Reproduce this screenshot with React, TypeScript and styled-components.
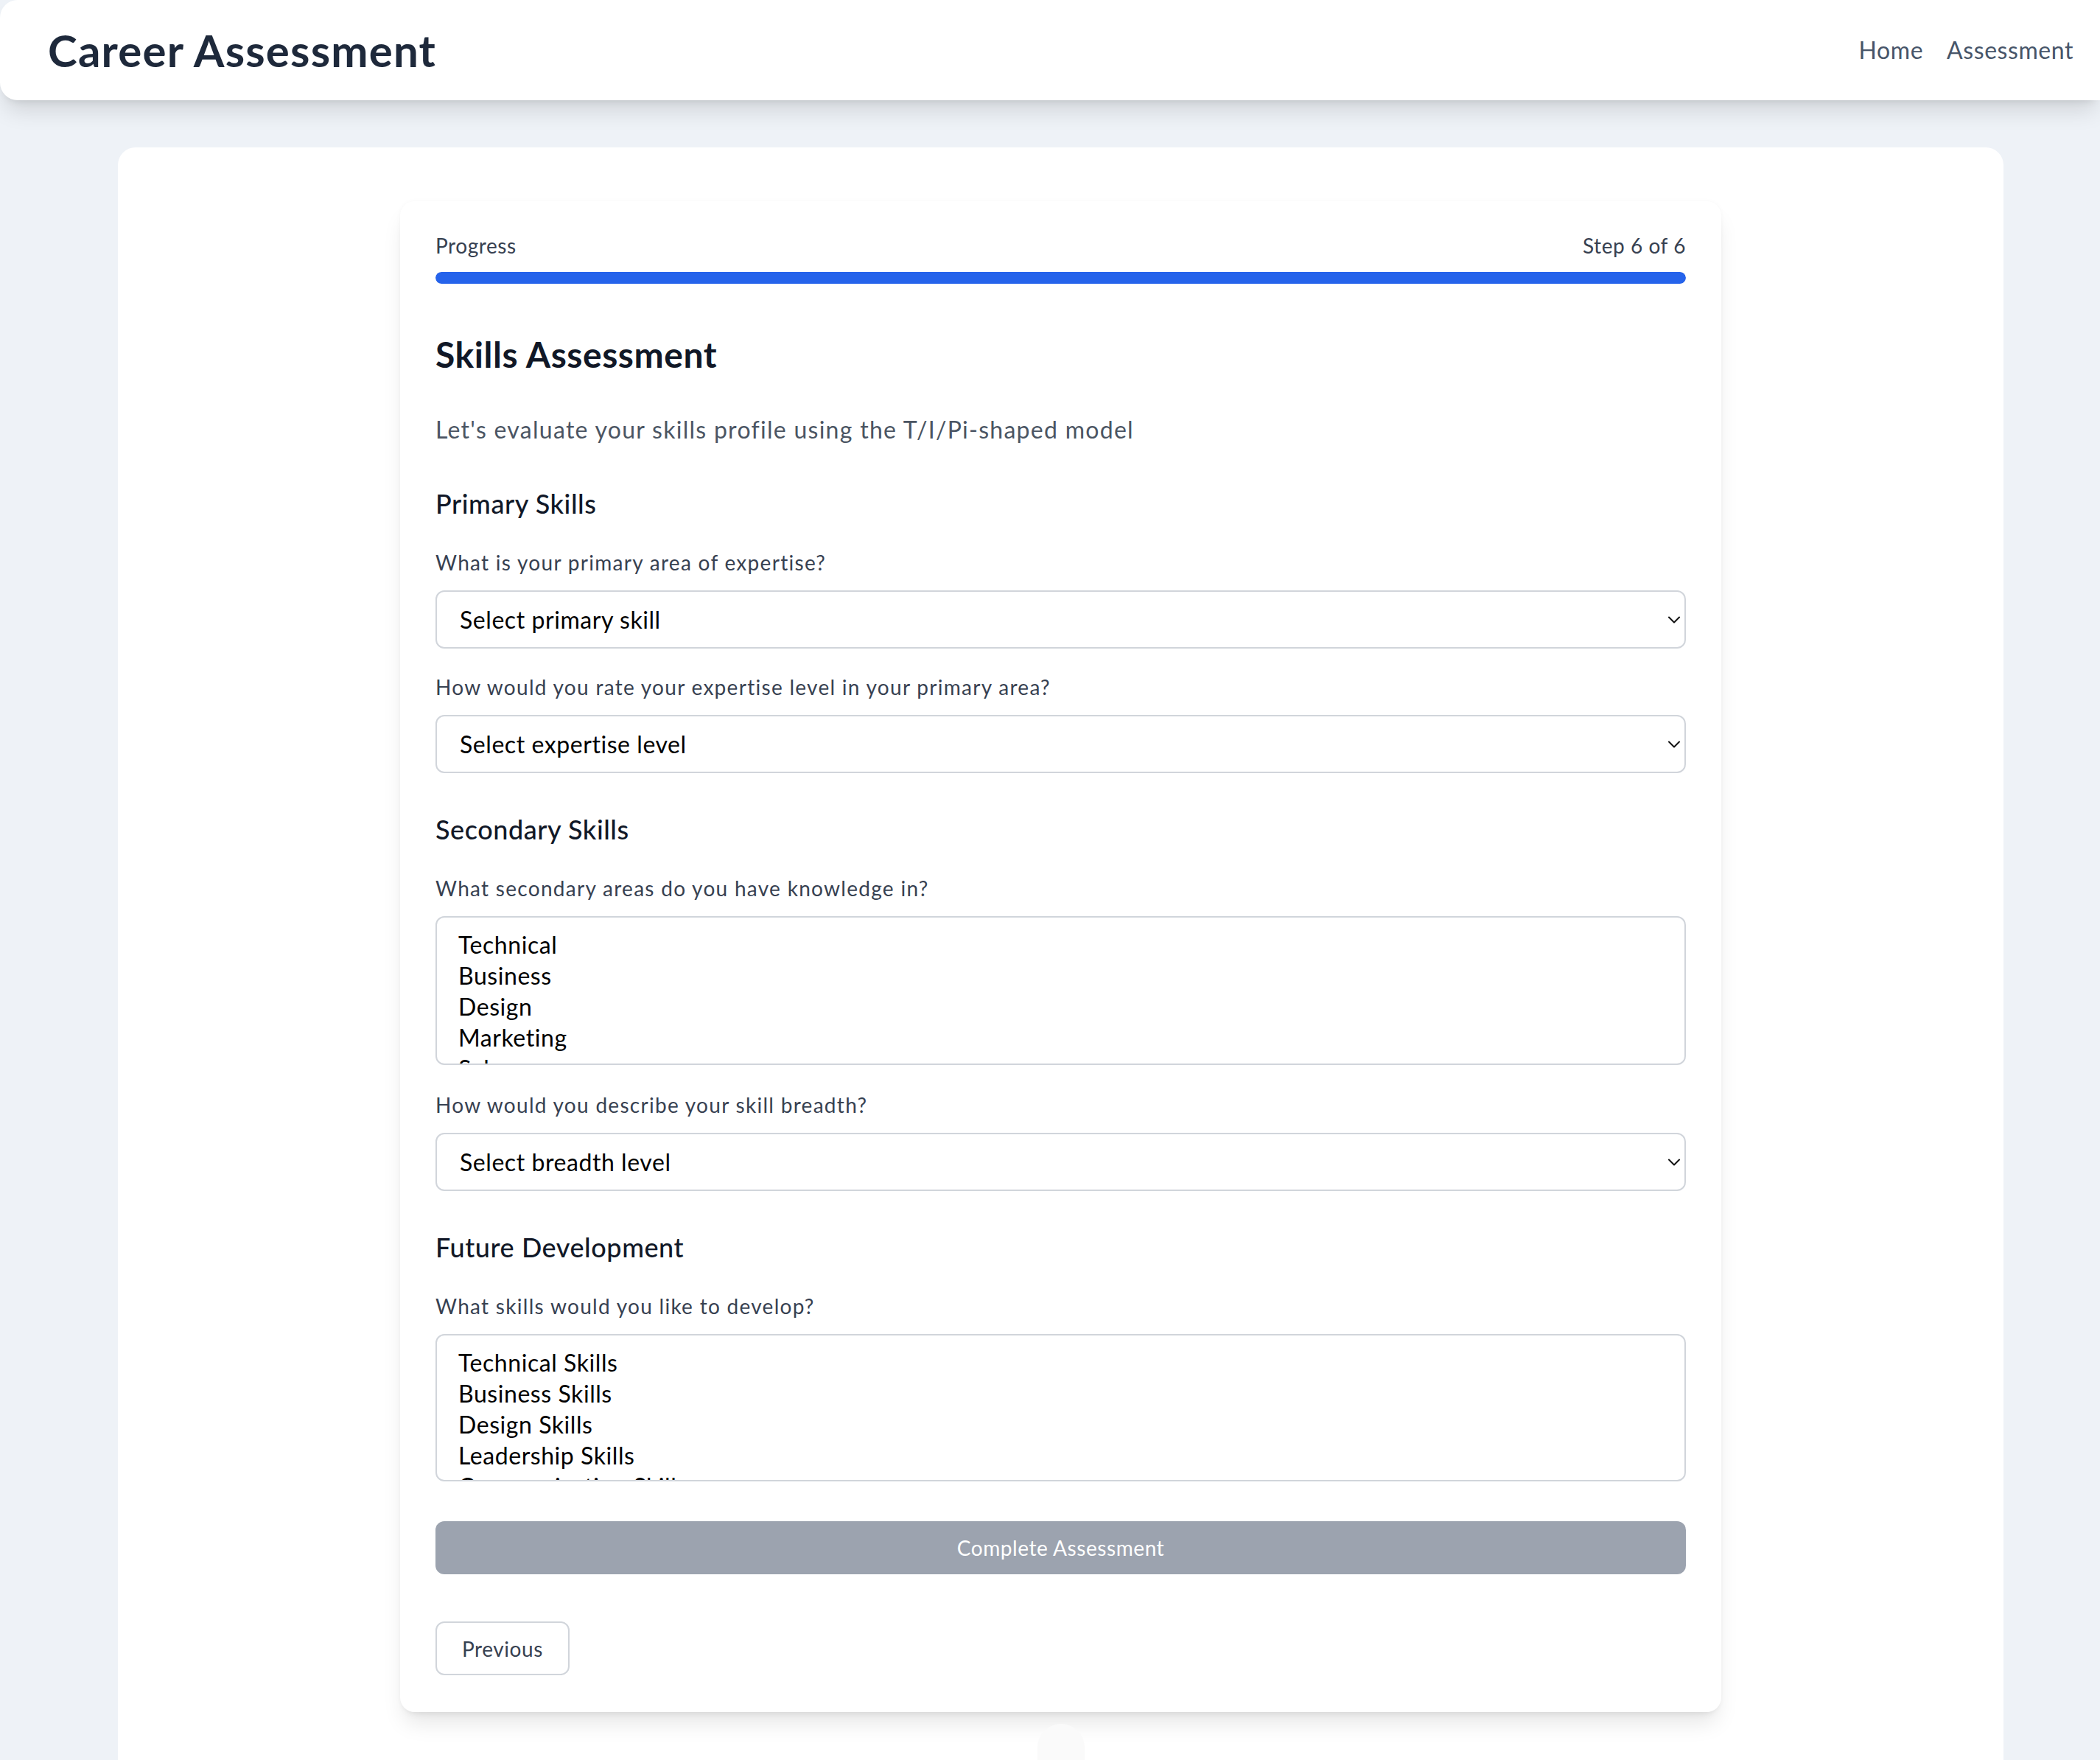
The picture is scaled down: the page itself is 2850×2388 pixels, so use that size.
import React from "react";
import styled, { createGlobalStyle } from "styled-components";

const GlobalStyle = createGlobalStyle`
  html, body {
    margin: 0;
    padding: 0;
    background: #eef2f7;
    overflow: hidden;
  }
  * { box-sizing: border-box; }
  body {
    font-family: "Lato", "Open Sans", sans-serif;
    letter-spacing: 0.035em;
    color: #111827;
  }
`;

const Page = styled.div`
  height: 100vh;
  overflow: hidden;
  background: #eef2f7;
`;

const Header = styled.header`
  position: relative;
  z-index: 2;
  display: flex;
  align-items: center;
  justify-content: space-between;
  height: 136px;
  padding: 0 36px 0 65px;
  background: #ffffff;
  border-radius: 24px 0 0 24px;
  box-shadow: 0 20px 30px -6px rgba(0, 0, 0, 0.12), 0 8px 12px -8px rgba(0, 0, 0, 0.12);
`;

const Brand = styled.h1`
  margin: 0;
  font-size: 60px;
  line-height: 72px;
  font-weight: 700;
  letter-spacing: 0.02em;
  color: #1e293b;
`;

const Nav = styled.nav`
  display: flex;
  gap: 32px;
`;

const NavLink = styled.a`
  font-size: 32px;
  line-height: 48px;
  color: #475569;
  text-decoration: none;
`;

const Main = styled.main`
  padding: 64px 131px 0 160px;
`;

const OuterCard = styled.section`
  background: #ffffff;
  border-radius: 24px;
  padding: 73px 0 80px;
  display: flex;
  flex-direction: column;
  align-items: center;
`;

const FormCard = styled.div`
  width: 1793px;
  background: #ffffff;
  border-radius: 20px;
  padding: 40px 48px 50px;
  box-shadow: 0 20px 30px -6px rgba(0, 0, 0, 0.1), 0 8px 12px -8px rgba(0, 0, 0, 0.1),
    0 0 6px rgba(0, 0, 0, 0.03);
  display: flex;
  flex-direction: column;
`;

const ProgressRow = styled.div`
  display: flex;
  justify-content: space-between;
  font-size: 28px;
  line-height: 40px;
  color: #374151;
  margin-bottom: 16px;
`;

const Track = styled.div`
  height: 16px;
  border-radius: 9999px;
  background: #e5e7eb;
  overflow: hidden;
`;

const Fill = styled.div`
  height: 100%;
  background: #2563eb;
  border-radius: 9999px;
`;

const Title = styled.h2`
  margin: 64px 0 0;
  font-size: 48px;
  line-height: 64px;
  font-weight: 700;
  color: #111827;
`;

const Intro = styled.p`
  margin: 46px 0 0;
  font-size: 32px;
  line-height: 48px;
  letter-spacing: 0.04em;
  color: #4b5563;
`;

const SectionTitle = styled.h3`
  margin: 48px 0 0;
  font-size: 36px;
  line-height: 56px;
  font-weight: 500;
  color: #111827;
`;

const Label = styled.label`
  display: block;
  margin: 32px 0 18px;
  font-size: 28px;
  line-height: 40px;
  letter-spacing: 0.046em;
  color: #374151;
`;

const SelectWrap = styled.div`
  position: relative;
`;

const Select = styled.select`
  display: block;
  width: 100%;
  height: 79px;
  padding: 0 60px 0 31px;
  border: 2px solid #d1d5db;
  border-radius: 12px;
  background: #ffffff;
  font-family: inherit;
  letter-spacing: inherit;
  font-size: 32px;
  color: #000000;
  appearance: none;
  -webkit-appearance: none;
  outline: none;
`;

const Chevron = styled.svg`
  position: absolute;
  right: 8px;
  top: 50%;
  width: 16px;
  height: 10px;
  margin-top: -5px;
  pointer-events: none;
`;

const ListBox = styled.div<{ $h: number }>`
  height: ${(p) => p.$h}px;
  margin-bottom: 2px;
  border: 2px solid #d1d5db;
  border-radius: 12px;
  padding: 16px 29px;
  overflow: hidden;
  background: #ffffff;
`;

const Option = styled.div`
  font-size: 32px;
  line-height: 42px;
  color: #000000;
  white-space: nowrap;
`;

const SubmitButton = styled.button`
  margin-top: 52px;
  width: 100%;
  height: 72px;
  border: none;
  border-radius: 12px;
  background: #9ca3af;
  color: #ffffff;
  font-family: inherit;
  letter-spacing: inherit;
  font-size: 28px;
  cursor: not-allowed;
`;

const Actions = styled.div`
  margin-top: 64px;
  display: flex;
`;

const PrevButton = styled.button`
  height: 73px;
  padding: 0 34px;
  border: 2px solid #d1d5db;
  border-radius: 12px;
  background: #ffffff;
  color: #374151;
  font-family: inherit;
  letter-spacing: inherit;
  font-size: 28px;
`;

const Ghost = styled.div`
  margin-top: 16px;
  width: 64px;
  height: 64px;
  border-radius: 32px 32px 0 0;
  background: #fafafa;
`;

const DropSelect = ({ placeholder }: { placeholder: string }) => (
  <SelectWrap>
    <Select defaultValue="">
      <option value="" disabled>
        {placeholder}
      </option>
    </Select>
    <Chevron viewBox="0 0 16 10" fill="none">
      <path d="M1 1.5 L8 8.5 L15 1.5" stroke="#111" strokeWidth="2" strokeLinecap="round" strokeLinejoin="round" />
    </Chevron>
  </SelectWrap>
);

const secondary = ["Technical", "Business", "Design", "Marketing", "Sales", "Operations"];
const future = [
  "Technical Skills",
  "Business Skills",
  "Design Skills",
  "Leadership Skills",
  "Communication Skills",
  "Analytical Skills",
];

export default function App() {
  return (
    <Page>
      <GlobalStyle />
      <Header>
        <Brand>Career Assessment</Brand>
        <Nav>
          <NavLink href="#">Home</NavLink>
          <NavLink href="#">Assessment</NavLink>
        </Nav>
      </Header>
      <Main>
        <OuterCard>
          <FormCard>
            <ProgressRow>
              <span>Progress</span>
              <span>Step 6 of 6</span>
            </ProgressRow>
            <Track>
              <Fill style={{ width: "100%" }} />
            </Track>

            <Title>Skills Assessment</Title>
            <Intro>Let's evaluate your skills profile using the T/I/Pi-shaped model</Intro>

            <SectionTitle>Primary Skills</SectionTitle>
            <Label>What is your primary area of expertise?</Label>
            <DropSelect placeholder="Select primary skill" />
            <Label>How would you rate your expertise level in your primary area?</Label>
            <DropSelect placeholder="Select expertise level" />

            <SectionTitle>Secondary Skills</SectionTitle>
            <Label>What secondary areas do you have knowledge in?</Label>
            <ListBox $h={202} role="listbox">
              {secondary.map((s) => (
                <Option key={s}>{s}</Option>
              ))}
            </ListBox>
            <Label>How would you describe your skill breadth?</Label>
            <DropSelect placeholder="Select breadth level" />

            <SectionTitle>Future Development</SectionTitle>
            <Label>What skills would you like to develop?</Label>
            <ListBox $h={200} role="listbox">
              {future.map((s) => (
                <Option key={s}>{s}</Option>
              ))}
            </ListBox>

            <SubmitButton disabled>Complete Assessment</SubmitButton>
            <Actions>
              <PrevButton>Previous</PrevButton>
            </Actions>
          </FormCard>
          <Ghost />
        </OuterCard>
      </Main>
    </Page>
  );
}
